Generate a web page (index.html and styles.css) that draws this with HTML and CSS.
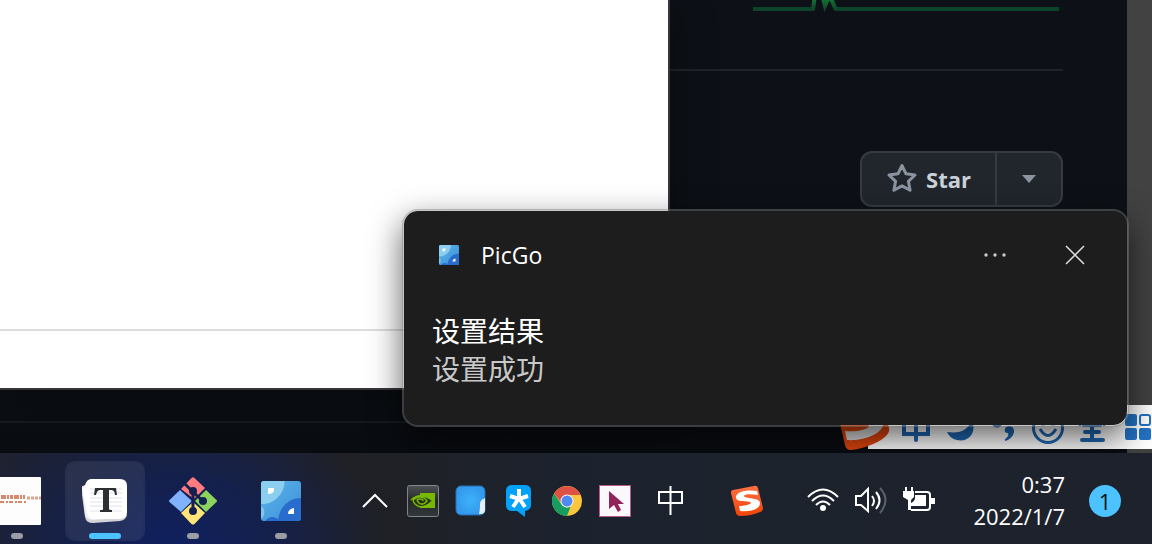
FILE: index.html
```html
<!DOCTYPE html>
<html lang="zh-CN">
<head>
<meta charset="utf-8">
<meta name="viewport" content="width=device-width, initial-scale=1">
<title>PicGo</title>
<link rel="stylesheet" href="styles.css">
</head>
<body>
<svg class="defs" aria-hidden="true">
  <defs>
    <linearGradient id="sky" x1="0" y1="0" x2="1" y2="1"><stop offset="0" stop-color="#5db5e9"/><stop offset="1" stop-color="#3c8fd9"/></linearGradient>
    <linearGradient id="pulse" x1="0" y1="0" x2="0" y2="1"><stop offset="0" stop-color="#158a38"/><stop offset="1" stop-color="#0d4429"/></linearGradient>
    <linearGradient id="metal" x1="0" y1="0" x2="0" y2="1"><stop offset="0" stop-color="#4d5254"/><stop offset=".5" stop-color="#25282a"/><stop offset="1" stop-color="#33383a"/></linearGradient>
    <linearGradient id="flame" x1="0" y1="0" x2="0" y2="1"><stop offset="0" stop-color="#ff7044"/><stop offset="1" stop-color="#f04405"/></linearGradient>
    <radialGradient id="note"><stop offset="0" stop-color="#3eb2fa"/><stop offset="1" stop-color="#3399ee"/></radialGradient>
    <clipPath id="tileClip"><rect width="40" height="40" rx="3"/></clipPath>
    <symbol id="picgo" viewBox="0 0 40 40">
      <g clip-path="url(#tileClip)">
        <rect width="40" height="40" fill="url(#sky)"/>
        <path d="M0 0h23.500C24 12 13 24 0 23z" fill="#8bcff0"/>
        <path d="M17 40C18 26 28 17 40 17v23z" fill="#286dce"/>
        <path d="M0 25c5 3 4 10 0 13z" fill="#80c7ee"/>
        <path d="M4 40c4-5 9-5 13-2v2z" fill="#286dce"/>
        <path d="M7 7h6v3q-1 3-6 3zM33 27v6h-6q0-5 6-6z" fill="#fff"/>
      </g>
    </symbol>
  </defs>
</svg>

<div class="screen">
  <main class="desktop">
    <section class="browser">
      <div class="page">
        <svg class="activity" viewBox="0 0 306 12" preserveAspectRatio="none" aria-hidden="true">
          <path d="M0 9h61M82 9h224" stroke="#0d4429" stroke-width="4"/>
          <path d="M60 10L62-6M69-6l3 12 5-12M76-6l7 16" fill="none" stroke="url(#pulse)" stroke-width="4"/>
        </svg>
        <hr class="page-rule">
        <div class="star-group">
          <button class="star" type="button">
            <svg width="32" height="32" viewBox="0 0 32 32" aria-hidden="true"><path d="M16 2.500l4 8.300 9 1.200-6.600 6.300 1.700 9-8.100-4.400-8.100 4.400 1.700-9L3 12l9-1.200z" fill="none" stroke="#8b949e" stroke-width="3" stroke-linejoin="round"/></svg>
            Star
          </button>
          <button class="star-more" type="button" aria-label="More"><svg width="16" height="8" viewBox="0 0 16 8" aria-hidden="true"><path d="M1 0h14L8 8z" fill="#8b949e"/></svg></button>
        </div>
        <hr class="footer-rule">
      </div>
      <div class="scrollbar"></div>
    </section>

    <section class="editor"><hr class="editor-rule"></section>

    <div class="ime">
      <svg class="ime-logo" width="56" height="60" viewBox="0 0 56 60" aria-hidden="true">
        <path d="M1 10L46 2l9 34c1 6-4 9-8 12-8 5-20 9-30 10-3 0-5-1-6-5z" transform="translate(-2 -1)" fill="#df450e"/>
        <path d="M43 20C34 16 6 18 7 28c1 6 25 1 26 5-1 4-14 6-24 5l2 9c12 1 31-3 36-14 2-9-24-6-25-9 1-3 12-1 20 0z" fill="#ddd"/>
      </svg>
      <div class="ime-tools">
        <svg width="32" height="40" viewBox="0 0 32 40" fill="none" stroke="#1f68b4" stroke-width="4" aria-hidden="true"><path d="M4 14h24v13H4zM16 8v25" stroke-linecap="round"/></svg>
        <svg width="32" height="40" viewBox="0 0 32 40" aria-hidden="true"><path d="M27 13c7 11-2 23-14 20-5-1-8-4-10-8 13 2 22-2 24-12z" fill="#1f68b4"/></svg>
        <svg width="32" height="40" viewBox="0 0 32 40" aria-hidden="true"><circle cx="9" cy="15" r="4" fill="none" stroke="#1f68b4" stroke-width="3"/><path d="M17 22c1-5 10-4 9 3-1 5-5 8-9 9v-2c3-2 4-4 3-6-2 0-4-1-3-4z" fill="#1f68b4"/></svg>
        <svg width="32" height="40" viewBox="0 0 32 40" fill="none" stroke="#1f68b4" aria-hidden="true"><circle cx="16" cy="21" r="14.500" stroke-width="3"/><path d="M9 18q2-3 4 0M19 18q2-3 4 0M8 22q8 13 16 0" stroke-width="3"/></svg>
        <svg width="32" height="40" viewBox="0 0 32 40" fill="none" stroke="#1f68b4" stroke-width="4" stroke-linecap="round" aria-hidden="true"><path d="M4 17L16 8l12 9M8 18h16M9 25h14M6 33h21M16 18v14"/></svg>
        <svg class="ime-menu" width="28" height="28" viewBox="0 0 28 28" fill="#2373c4" aria-hidden="true"><rect x="1" y="1" width="12" height="12" rx="2"/><rect x="1" y="15" width="12" height="12" rx="2"/><rect x="15" y="15" width="12" height="12" rx="2"/><rect x="16" y="2" width="10" height="10" rx="2" fill="#fff" stroke="#2373c4" stroke-width="2"/></svg>
      </div>
    </div>

    <section class="toast" role="status">
      <header class="toast-head">
        <svg width="20" height="20" aria-hidden="true"><use href="#picgo"/></svg>
        <span class="toast-app">PicGo</span>
        <button class="toast-button" type="button" aria-label="More"><svg width="24" height="24" viewBox="0 0 24 24" fill="#ccc" aria-hidden="true"><circle cx="3" cy="12" r="1.700"/><circle cx="12" cy="12" r="1.700"/><circle cx="21" cy="12" r="1.700"/></svg></button>
        <button class="toast-button" type="button" aria-label="Close"><svg width="24" height="24" viewBox="0 0 24 24" aria-hidden="true"><path d="M3 3l18 18M21 3L3 21" stroke="#ddd" stroke-width="1.500"/></svg></button>
      </header>
      <p class="toast-title">设置结果</p>
      <p class="toast-text">设置成功</p>
    </section>
  </main>

  <footer class="taskbar">
    <nav class="apps">
      <button class="app" type="button" aria-label="Document">
        <svg width="48" height="48" viewBox="0 0 48 48" aria-hidden="true"><rect width="48" height="48" rx="1" fill="#fdfdfd"/><path d="M4 20h28" stroke="#c9663d" stroke-width="4" stroke-dasharray="3 1 5 1 2 1" opacity=".75"/><path d="M7 25h27" stroke="#d88561" stroke-width="2" stroke-dasharray="4 2 2 1"/><path d="M34 21h14" stroke="#dba58c" stroke-width="3" stroke-dasharray="3 1"/></svg>
      </button>
      <button class="app app-active" type="button" aria-label="Typora">
        <svg width="48" height="48" viewBox="0 0 48 48" aria-hidden="true">
          <path d="M1 11v7l3 22q1 6 8 6l27-2q6-1 7-6z" fill="#d4d4d8"/>
          <path d="M1 9l3 28q1 6 8 6l27-2q6-1 7-6V20z" fill="#f0f0f2"/>
          <path d="M10 2h29q7 0 7 7v26q0 6-7 7H13q-6 0-7-7L1 12q0-3 3-4 2-6 6-6z" fill="#fff"/>
          <path d="M9 12h32M9 16h32M9 21h32M9 25h32M9 29h32M9 34h32" stroke="#e2e2e4"/>
          <path d="M14 11h21l1 7h-2c0-4-2-5-5-5h-1v18c0 2 1 2 3 2v2H19v-2c3 0 3 0 3-2V13h-2c-3 0-4 1-5 5h-2z" fill="#2c3032"/>
        </svg>
      </button>
      <button class="app" type="button" aria-label="Git Bash">
        <svg width="48" height="48" viewBox="0 0 48 48" aria-hidden="true">
          <path d="M22.500 1q1.500-1.500 3 0L36 11 25 22 12 12z" fill="#ff7b7d"/><path d="M11 13l12 11-11 11L.5 25q-1-1 0-2z" fill="#80b2ff"/><path d="M37 13l10.500 10q1 1 0 2L37 35 26 24z" fill="#8bd35c"/><path d="M24 25l12 11-10.500 11q-1.500 1-3 0L12 36z" fill="#ffe477"/>
          <path d="M15 6l9 9v19M24 15l10 9" fill="none" stroke="#14204f" stroke-width="3"/>
          <circle cx="24" cy="14" r="4" fill="#14204f"/><circle cx="34" cy="24" r="4" fill="#14204f"/><circle cx="24" cy="34" r="4" fill="#14204f"/>
        </svg>
      </button>
      <button class="app" type="button" aria-label="PicGo"><svg width="40" height="40" aria-hidden="true"><use href="#picgo"/></svg></button>
    </nav>

    <div class="tray">
      <div class="tray-icons">
        <svg viewBox="0 0 32 32" aria-label="Show hidden icons" role="img"><path d="M4 22L16 10l12 12" fill="none" stroke="#fff" stroke-width="2"/></svg>
        <svg viewBox="0 0 32 32" aria-label="NVIDIA" role="img"><rect x=".5" y=".5" width="31" height="31" rx="2" fill="url(#metal)" stroke="#818688"/><path d="M13 8h15v15H13z" fill="#76b900"/><path d="M4 15q9-9 22 1-11 11-19 3-3-2-3-4z" fill="#26301c"/><path d="M4 15q9-9 22 1-11 10-18 3-4-4 1-6 7-3 11 3-4 5-8 2-4-4 1-4 3 0 3 2" fill="none" stroke="#76b900" stroke-width="1.500"/><path d="M14 21q6 0 10-5l4 4v3H14z" fill="#76b900"/></svg>
        <svg viewBox="0 0 32 32" aria-label="Notes" role="img"><rect x="1" y="1" width="29" height="29" rx="5" fill="url(#note)" stroke="#266fae"/><path d="M30 13v12q0 4-5 4h-1q1-4 1-10 0-4 5-6z" fill="#e8edf2"/></svg>
        <svg viewBox="0 0 32 32" aria-label="Messenger" role="img"><path d="M9 0h13q6 0 6 6v14q0 5-6 6v6l-8-6H9q-6 0-6-6V6q0-6 6-6z" fill="#03a2fa"/><path d="M16 4v9M7 11l9 3 9-3M10 22l6-9 6 9" fill="none" stroke="#fff" stroke-width="4"/></svg>
        <svg viewBox="0 0 32 32" aria-label="Chrome" role="img"><circle cx="16" cy="16" r="15" fill="#fac63c"/><path d="M3 8.500A15 15 0 0 1 29.500 10H16a6 6 0 0 0-5.500 8z" fill="#df5145"/><path d="M3 8.500l7.500 11q3 4 9 2.500L16 31A15 15 0 0 1 3 8.500z" fill="#179d61"/><circle cx="16" cy="16" r="6.500" fill="#f5f5f5"/><circle cx="16" cy="16" r="5.500" fill="#4d8af4"/></svg>
        <svg viewBox="0 0 32 32" aria-label="Pointer" role="img"><rect x=".5" y=".5" width="31" height="31" fill="#fbf8fb" stroke="#b75a8b"/><path d="M10 6v18l5-4 4 7 3-2-3-6h6z" fill="#92245a"/></svg>
      </div>
      <svg class="input-mode" width="32" height="32" viewBox="0 0 32 32" aria-label="中" role="img"><path d="M4 7h23v11H4zM15.500 1v29" fill="none" stroke="#fff" stroke-width="2"/></svg>
      <svg class="sogou" width="32" height="32" viewBox="0 0 32 32" aria-label="Sogou" role="img"><path d="M2 5L23 1q3-1 4 2l5 20q0 3-3 4-9 4-20 4-3 0-4-3L0 8q0-3 2-3z" fill="url(#flame)"/><path d="M26 6C15 4 4 7 5 13c1 5 14 2 15 5-1 2-8 3-12 3l1 5c9 1 20-1 20-8 0-6-16-4-16-7 0-2 7-2 14-1z" fill="#fff"/></svg>
      <div class="tray-icons">
        <svg viewBox="0 0 32 32" aria-label="Wi-Fi" role="img"><g fill="none" stroke="#fff" stroke-width="2"><path d="M1 12q15-15 30 0M5 16q11-11 22 0M9 20q7-7 14 0"/></g><circle cx="16" cy="23" r="3" fill="#fff"/></svg>
        <svg viewBox="0 0 32 32" fill="none" stroke="#fff" stroke-width="2" aria-label="Volume" role="img"><path d="M1 11h5l7-7v22l-7-6H1zM17 11q4 5 0 10M21 7q7 8 0 17"/><path d="M25 3q11 12 0 25" stroke="#596069"/></svg>
        <svg viewBox="0 0 32 32" aria-label="Battery" role="img"><path d="M12 7h12q3 0 3 3v12q0 3-3 3H8" fill="none" stroke="#fff" stroke-width="2"/><path d="M12 10h11v11H8v-3q4-2 4-5zM28 13h4v6h-4zM2 2h2v4h4V2h2v4h1v6l-3 3v10H5V15l-5-3V6h2z" fill="#fff"/></svg>
      </div>
      <div class="clock"><time>0:37</time><time datetime="2022-01-07">2022/1/7</time></div>
      <span class="badge">1</span>
    </div>
  </footer>
</div>
</body>
</html>
```

FILE: styles.css
```css
* { box-sizing: border-box; }
body {
  margin: 0;
  background: #0d1117;
  font-family: "Open Sans", "Noto Sans CJK SC", sans-serif;
  color: #fff;
}
button { border: 0; padding: 0; background: none; color: inherit; font: inherit; }
hr { border: 0; margin: 0; height: 2px; }
svg { display: block; flex: none; }
.defs { position: absolute; width: 0; height: 0; }

.screen { display: flex; flex-direction: column; min-height: 100vh; }
.desktop { position: relative; display: flex; flex: 1; overflow: hidden; }

/* Browser window behind everything */
.browser { display: flex; flex: 1; }
.page {
  display: flex;
  flex: 1;
  flex-direction: column;
  align-items: flex-end;
  background: linear-gradient(#0d1117 80%, #090c11);
}
.activity { width: 306px; height: 12px; margin-right: 68px; }
.page-rule { width: calc(100% - 64px); margin: 57px 64px 0 0; background: #1f242b; }
.footer-rule { width: 100%; margin-top: 214px; background: #171b20; }
.scrollbar { width: 25px; background: #424242; }
.star-group {
  display: flex;
  height: 56px;
  margin: 80px 64px 0 0;
  border: 2px solid #363b42;
  border-radius: 12px;
  background: #21262d;
}
.star {
  display: flex;
  align-items: center;
  gap: 8px;
  padding: 0 24px;
  color: #c9d1d9;
  font-size: 22px;
  font-weight: 700;
}
.star-more {
  display: grid;
  place-items: center;
  width: 66px;
  border-left: 2px solid #363b42;
}

/* Editor window */
.editor {
  position: absolute;
  top: 0;
  right: 482px;
  bottom: 63px;
  left: 0;
  display: flex;
  flex-direction: column;
  justify-content: flex-end;
  padding-bottom: 57px;
  border: solid #36363a;
  border-width: 0 2px 2px 0;
  background: #fff;
  box-shadow: 0 8px 40px #0006;
}
.editor-rule { background: #ddd; }

/* Input method bar */
.ime { position: absolute; right: 0; bottom: 0; display: flex; align-items: flex-end; }
.ime-logo { z-index: 1; margin-right: -24px; }
.ime-tools {
  display: flex;
  align-items: center;
  gap: 12px;
  height: 44px;
  margin-bottom: 4px;
  padding-left: 32px;
  background: #fff;
}
.ime-menu { margin-left: 4px; }

/* Notification */
.toast {
  position: absolute;
  right: 23px;
  bottom: 26px;
  z-index: 2;
  width: 727px;
  max-width: calc(100% - 48px);
  padding: 20px 28px 38px;
  border: 2px solid #80808070;
  border-radius: 16px;
  background: #1d1d1d;
  background-clip: padding-box;
  box-shadow: 0 12px 32px #0009;
}
.toast-head { display: flex; align-items: center; height: 48px; padding-left: 7px; }
.toast-app { flex: 1; margin-left: 22px; font-size: 23px; line-height: 32px; }
.toast-button { display: grid; place-items: center; width: 48px; height: 48px; }
.toast-button + .toast-button { margin-left: 32px; }
.toast-title, .toast-text {
  margin: 0;
  font: 28px/38px "Noto Sans CJK SC", sans-serif;
}
.toast-title { margin-top: 32px; }
.toast-text { color: #c8c8c8; }

/* Taskbar */
.taskbar {
  display: flex;
  align-items: center;
  justify-content: space-between;
  height: 91px;
  padding-top: 5px;
  overflow: hidden;
  background:
    radial-gradient(ellipse 210px 150px at 175px 90px, #10205f, #14204b 45%, transparent),
    linear-gradient(90deg, #1f2230, #202024 330px, #1c222d 560px, #1d222c);
}
.apps { display: flex; gap: 8px; margin-left: -23px; }
.app {
  position: relative;
  display: grid;
  place-items: center;
  width: 80px;
  height: 80px;
  border-radius: 10px;
}
.app::after {
  content: "";
  position: absolute;
  bottom: 2px;
  left: 50%;
  width: 12px;
  height: 6px;
  border-radius: 3px;
  background: #9a9ca6;
  translate: -50%;
}
.app-active { border: 2px solid #ffffff12; background: #ffffff14; background-clip: padding-box; }
.app-active::after { bottom: 0; width: 32px; background: #4cc2ff; }

.tray { display: flex; align-items: center; padding-right: 31px; }
.tray-icons { display: flex; gap: 16px; }
.tray-icons svg { width: 32px; height: 32px; }
.input-mode { margin-left: 24px; }
.sogou { margin: 0 44px; }
.clock {
  display: flex;
  flex-direction: column;
  width: 130px;
  padding-bottom: 2px;
  text-align: right;
  font-size: 22px;
  line-height: 32px;
}
.badge {
  width: 32px;
  height: 32px;
  margin-left: 24px;
  border-radius: 50%;
  background: #4cc2ff;
  color: #111;
  font-size: 22px;
  line-height: 32px;
  text-align: center;
}
```
